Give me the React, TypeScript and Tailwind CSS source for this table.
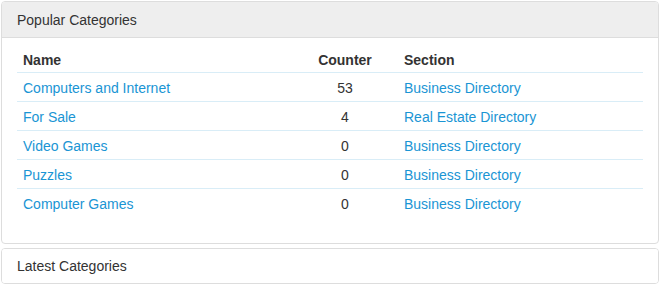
import React from "react";

const rows = [
  { name: "Computers and Internet", counter: 53, section: "Business Directory" },
  { name: "For Sale", counter: 4, section: "Real Estate Directory" },
  { name: "Video Games", counter: 0, section: "Business Directory" },
  { name: "Puzzles", counter: 0, section: "Business Directory" },
  { name: "Computer Games", counter: 0, section: "Business Directory" },
];

export default function App() {
  return (
    <div
      className="w-[660px] h-[284px] bg-white px-[1px] pt-[1px] text-[14px] leading-[20px] text-[#333]"
      style={{ fontFamily: '"Liberation Sans", Arial, sans-serif' }}
    >
      <div className="border border-[#dddddd] rounded-[4px] overflow-hidden">
        <div className="h-[36px] flex items-center px-[15px] bg-[#eeeeee] border-b border-[#dddddd]">
          Popular Categories
        </div>
        <div className="px-[15px] pt-[10px] h-[205px]">
          <table className="w-full border-collapse">
            <thead>
              <tr className="border-b border-[#d9edf7]">
                <th className="text-left font-bold px-[6px] pt-[2px] pb-[2px]">Name</th>
                <th className="text-center font-bold px-[6px] pt-[2px] pb-[2px] w-[106px]">Counter</th>
                <th className="text-left font-bold px-[6px] pt-[2px] pb-[2px] w-[245px]">Section</th>
              </tr>
            </thead>
            <tbody>
              {rows.map((r, i) => (
                <tr
                  key={r.name}
                  className={i < rows.length - 1 ? "border-b border-[#d9edf7]" : ""}
                >
                  <td className="px-[6px] pt-[5px] pb-[3px]">
                    <a className="text-[#1a95d4]">{r.name}</a>
                  </td>
                  <td className="px-[6px] pt-[5px] pb-[3px] text-center">{r.counter}</td>
                  <td className="px-[6px] pt-[5px] pb-[3px]">
                    <a className="text-[#1a95d4]">{r.section}</a>
                  </td>
                </tr>
              ))}
            </tbody>
          </table>
        </div>
      </div>
      <div className="mt-[4px] border border-[#dddddd] rounded-[4px] overflow-hidden">
        <div className="h-[34px] flex items-center px-[15px] bg-white">Latest Categories</div>
      </div>
    </div>
  );
}
